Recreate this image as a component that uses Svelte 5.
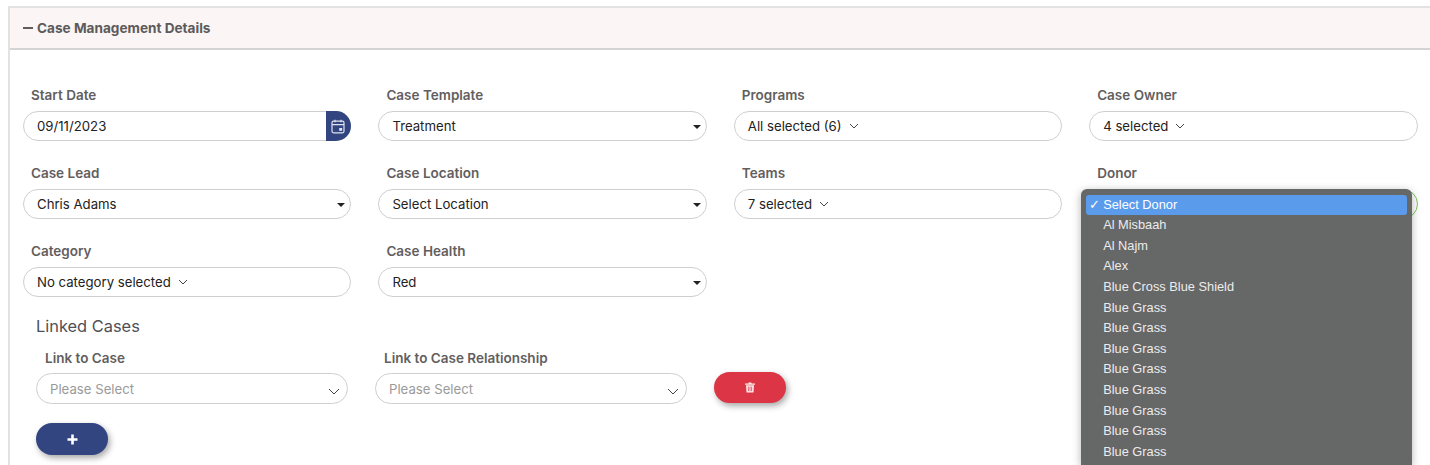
<script>
  const fields = [
    { label: "Start Date", value: "09/11/2023", kind: "date" },
    { label: "Case Template", value: "Treatment", kind: "select" },
    { label: "Programs", value: "All selected (6)", kind: "multi" },
    { label: "Case Owner", value: "4 selected", kind: "multi" },
    { label: "Case Lead", value: "Chris Adams", kind: "select" },
    { label: "Case Location", value: "Select Location", kind: "select" },
    { label: "Teams", value: "7 selected", kind: "multi" },
    { label: "Donor", value: "", kind: "donor" },
    { label: "Category", value: "No category selected", kind: "multi" },
    { label: "Case Health", value: "Red", kind: "select" },
  ];

  const donors = [
    "Al Misbaah", "Al Najm", "Alex", "Blue Cross Blue Shield",
    "Blue Grass", "Blue Grass", "Blue Grass", "Blue Grass",
    "Blue Grass", "Blue Grass", "Blue Grass", "Blue Grass",
  ];
</script>

<div class="panel">
  <div class="panel-head">
    <span class="minus"></span>
    <h3>Case Management Details</h3>
  </div>

  <div class="panel-body">
    <div class="grid">
      {#each fields as f}
        <div class="field">
          <div class="label">{f.label}</div>
          <div class="control" class:donor={f.kind === "donor"}>
            <span>{f.value}</span>
            {#if f.kind === "select"}
              <span class="caret"></span>
            {:else if f.kind === "multi"}
              <svg class="chev" viewBox="0 0 10 6" width="10" height="6"><path d="M1 1l4 4 4-4" fill="none" stroke="#444" stroke-width="1"/></svg>
            {:else if f.kind === "date"}
              <span class="cal">
                <svg viewBox="0 0 14 15" width="14" height="15">
                  <rect x="1" y="2.2" width="12" height="11.6" rx="1.5" fill="none" stroke="#dfe3ee" stroke-width="1.2"/>
                  <path d="M1 5.6h12M4 .8v2.4M10 .8v2.4" fill="none" stroke="#dfe3ee" stroke-width="1.2"/>
                  <rect x="8.2" y="9" width="3" height="2.8" fill="#dfe3ee"/>
                </svg>
              </span>
            {/if}
          </div>
          {#if f.kind === "donor"}
            <div class="menu">
              <div class="opt on"><span class="tick">✓</span>Select Donor</div>
              {#each donors as d}
                <div class="opt">{d}</div>
              {/each}
            </div>
          {/if}
        </div>
      {/each}
    </div>

    <div class="linked">
      <div class="linked-title">Linked Cases</div>
      <div class="link-row">
        <div class="link-field">
          <div class="label">Link to Case</div>
          <div class="control ph">
            <span>Please Select</span>
            <svg class="chev2" viewBox="0 0 12 7" width="12" height="7"><path d="M1 1l5 5 5-5" fill="none" stroke="#444" stroke-width="1"/></svg>
          </div>
        </div>
        <div class="link-field">
          <div class="label">Link to Case Relationship</div>
          <div class="control ph">
            <span>Please Select</span>
            <svg class="chev2" viewBox="0 0 12 7" width="12" height="7"><path d="M1 1l5 5 5-5" fill="none" stroke="#444" stroke-width="1"/></svg>
          </div>
        </div>
        <button class="btn red" aria-label="Delete">
          <svg viewBox="0 0 10 11" width="10" height="11">
            <path d="M0 1.6h10v1.1H0zM3.3 1.6l.5-1.2h2.4l.5 1.2z" fill="#fbe9ea"/>
            <path d="M1 3.2h8l-.5 7.4h-7z" fill="#fbe9ea"/>
            <path d="M3.4 4.6v4.6M5 4.6v4.6M6.6 4.6v4.6" stroke="#dc3545" stroke-width=".7"/>
          </svg>
        </button>
      </div>
      <button class="btn blue" aria-label="Add">
        <svg viewBox="0 0 11 11" width="11" height="11"><path d="M5.5 .5v10M.5 5.5h10" stroke="#fff" stroke-width="2.6"/></svg>
      </button>
    </div>
  </div>
</div>

<style>
  :global(html), :global(body) { overflow: hidden; height: 100vh; background: #fff; }

  .panel {
    margin: 6px 0 0 8px;
    width: 1422px;
    height: calc(100vh - 6px);
    border-left: 2px solid #e2e2e2;
    border-top: 2px solid #e2e2e2;
    font-family: Inter, "Noto Sans", sans-serif;
    color: #212529;
    box-sizing: border-box;
  }

  .panel-head {
    display: flex;
    align-items: center;
    gap: 4px;
    height: 40px;
    padding-left: 13px;
    background: #fbf5f5;
    border-bottom: 2px solid #d4d4d4;
  }
  .minus { width: 10px; height: 2.5px; background: #5d5d5d; }
  h3 { margin: 0; font-size: 13.6px; font-weight: 700; color: #5d5a5a; }

  .panel-body { padding: 37px 0 0 13px; }

  .grid {
    display: grid;
    grid-template-columns: repeat(4, 328.4px);
    column-gap: 27px;
    row-gap: 24px;
  }

  .field { position: relative; }

  .label {
    padding-left: 8px;
    height: 16px;
    margin-bottom: 8px;
    font-size: 13.5px;
    line-height: 16px;
    font-weight: 600;
    color: #625e5e;
  }

  .control {
    display: flex;
    align-items: center;
    gap: 7px;
    height: 30px;
    padding: 0 13px;
    box-sizing: border-box;
    position: relative;
    border: 1px solid #cfcfcf;
    border-radius: 16px;
    font-size: 13.2px;
    color: #222;
    background: #fff;
  }
  .control.donor { border-color: #7cc35c; }

  .caret {
    position: absolute;
    right: 5px;
    top: 13px;
    border: 4px solid transparent;
    border-top: 4px solid #222;
    border-bottom: 0;
  }

  .cal {
    position: absolute;
    right: -1px;
    top: -1px;
    width: 25px;
    height: 30px;
    padding-right: 1px;
    box-sizing: border-box;
    display: flex;
    align-items: center;
    justify-content: center;
    background: #334580;
    border-radius: 0 16px 16px 0;
  }

  .menu {
    position: absolute;
    left: -8px;
    top: 24px;
    z-index: 5;
    width: 331px;
    height: 276px;
    overflow: hidden;
    padding: 5.6px 5px 0;
    box-sizing: border-box;
    background: #666767;
    border-radius: 6px 6px 0 0;
    box-shadow: 0 2px 8px rgba(0, 0, 0, .3);
    font-family: "Liberation Sans", Arial, sans-serif;
    font-size: 12.8px;
    color: #ececec;
  }
  .opt {
    height: 20.6px;
    line-height: 20.6px;
    padding-left: 17px;
    position: relative;
    border-radius: 3px;
  }
  .opt.on { background: #5a9bec; color: #fff; }
  .tick { position: absolute; left: 3px; font-size: 13px; }

  .linked { padding-left: 13px; margin-top: 19px; }
  .linked-title { font-size: 16.4px; line-height: 20px; color: #4f4f56; }

  .link-row { display: flex; align-items: flex-end; gap: 27px; margin-top: 14px; width: 750px; }
  .link-field { width: 312px; }
  .link-field .label { margin-bottom: 7px; padding-left: 9px; }
  .control.ph { color: #9a9a9a; height: 31px; }
  .chev2 { position: absolute; right: 7px; top: 14px; }

  .btn {
    display: flex;
    align-items: center;
    justify-content: center;
    width: 72px;
    height: 31px;
    padding: 0;
    border: 0;
    border-radius: 16px;
    box-shadow: 2px 3px 6px rgba(0, 0, 0, .35);
  }
  .red { background: #dc3545; margin-bottom: 1px; }
  .blue { background: #334580; margin-top: 19px; height: 32px; }
</style>
